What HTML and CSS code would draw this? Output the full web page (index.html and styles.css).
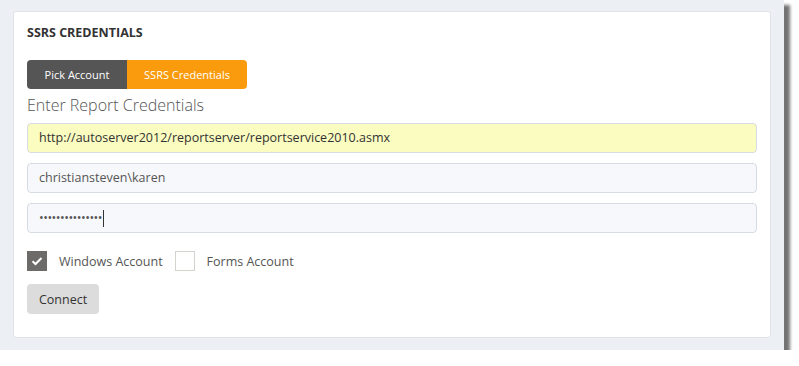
FILE: index.html
```html
<!DOCTYPE html>
<html lang="en">
<head>
    <meta charset="UTF-8">
    <title>SSRS Credentials</title>
    <link rel="stylesheet" href="styles.css">
</head>
<body>
    <div class="frame">
        <div class="card">
            <h3 class="title">SSRS CREDENTIALS</h3>

            <div class="tabs">
                <span class="tab">Pick Account</span>
                <span class="tab active">SSRS Credentials</span>
            </div>

            <h4 class="subtitle">Enter Report Credentials</h4>

            <div class="field highlight">http://autoserver2012/reportserver/reportservice2010.asmx</div>
            <div class="field">christiansteven\karen</div>
            <div class="field password">•••••••••••••••<span class="caret"></span></div>

            <div class="checks">
                <label class="check">
                    <span class="box checked">
                        <svg width="12" height="10" viewBox="0 0 12 10"><path d="M1.5 5.2 L4.5 8 L10.5 2" fill="none" stroke="#fff" stroke-width="2"/></svg>
                    </span>
                    Windows Account
                </label>
                <label class="check">
                    <span class="box"></span>
                    Forms Account
                </label>
            </div>

            <button type="button" class="button">Connect</button>
        </div>
    </div>
</body>
</html>
```

FILE: styles.css
```css
body { margin: 0; background: #fff; font-family: "Open Sans", Arial, sans-serif; color: #333; }
.frame { width: 784px; height: 350px; box-sizing: border-box; padding: 11px 13px; background: #eceff4; box-shadow: 6px 5px 3px rgba(0, 0, 0, 0.55); }
.card { height: 327px; box-sizing: border-box; padding: 13px 13px 0; background: #fff; border: 1px solid #dfe2e7; border-radius: 3px; }
.title { margin: 0; font-size: 12.5px; font-weight: bold; line-height: 16px; color: #333; }
.tabs { display: flex; margin-top: 19px; width: 220px; border-radius: 4px; overflow: hidden; }
.tab { display: block; height: 29px; line-height: 29px; background: #555; color: #fff; font-size: 11px; text-align: center; width: 100px; }
.tab.active { background: #f99b0c; width: 120px; }
.subtitle { margin: 4px 0 6px; font-size: 16px; font-weight: 300; line-height: 24px; color: #555; }
.field { height: 30px; box-sizing: border-box; margin-bottom: 10px; padding: 0 11px; border: 1px solid #d6dbe4; border-radius: 4px; background: #f7f8fb; font-size: 12.5px; line-height: 28px; color: #555; }
.field.highlight { background: #fafcc0; color: #333; }
.field.password { letter-spacing: -0.5px; display: flex; align-items: center; }
.caret { display: inline-block; width: 1px; height: 17px; background: #333; margin-left: 1px; }
.checks { display: flex; gap: 12px; margin-top: 18px; }
.check { display: flex; align-items: center; gap: 12px; font-size: 12.5px; color: #555; }
.box { width: 20px; height: 20px; box-sizing: border-box; border: 1px solid #d6d3cf; background: #fff; display: flex; align-items: center; justify-content: center; }
.box.checked { background: #6d6b6a; border-color: #6d6b6a; }
.button { margin-top: 13px; height: 30px; width: 72px; border: none; border-radius: 4px; background: #dcdcdc; color: #333; font-family: "Open Sans", Arial, sans-serif; font-size: 12.5px; padding: 0; }
```
